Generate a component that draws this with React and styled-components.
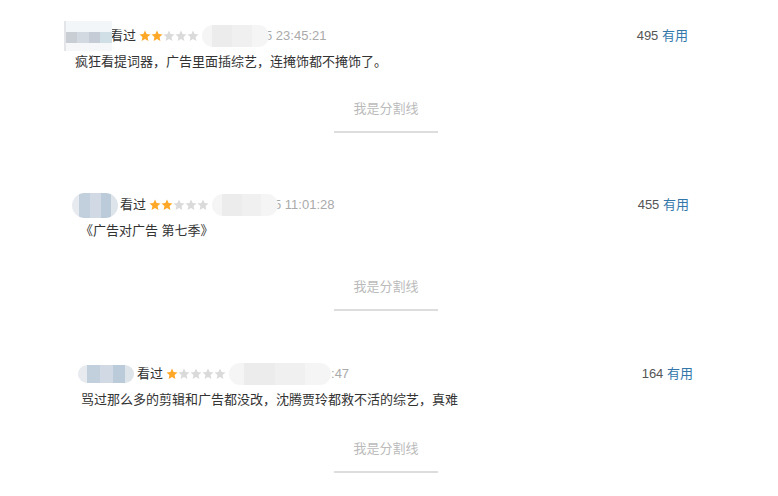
import React from 'react';
import styled, { createGlobalStyle } from 'styled-components';

const GlobalStyle = createGlobalStyle`
  html, body {
    margin: 0;
    padding: 0;
    background: #fff;
  }
  body {
    font-family: "Liberation Sans", "Noto Sans CJK SC", sans-serif;
    font-size: 13px;
    color: #494949;
  }
`;

const comments = [
  {
    top: 26,
    left: 64,
    right: 90,
    name: { width: 46, height: 30, shape: 'rect' },
    nameGap: -2,
    stars: 2,
    dateBlur: 67,
    timeShift: -4,
    time: '5 23:45:21',
    text: '疯狂看提词器，广告里面插综艺，连掩饰都不掩饰了。',
    textLeft: 11,
    votes: 495,
    dividerGap: 27,
  },
  {
    top: 62,
    left: 72,
    right: 89,
    name: { width: 46, height: 25, shape: 'pill' },
    nameGap: 2,
    stars: 2,
    dateBlur: 66,
    timeShift: -4,
    time: '5 11:01:28',
    text: '《广告对广告 第七季》',
    textLeft: 8,
    votes: 455,
    dividerGap: 36,
  },
  {
    top: 53,
    left: 78,
    right: 85,
    name: { width: 56, height: 18, shape: 'pill' },
    nameGap: 3,
    stars: 1,
    dateBlur: 102,
    timeShift: 0,
    time: ':47',
    text: '骂过那么多的剪辑和广告都没改，沈腾贾玲都救不活的综艺，真难',
    textLeft: 3,
    votes: 164,
    dividerGap: 29,
  },
];

function Star({ on }) {
  return (
    <svg width="12" height="12" viewBox="0 0 24 24">
      <polygon
        points="12,1 15.2,8.2 23,9 17.1,14.2 18.8,22 12,18 5.2,22 6.9,14.2 1,9 8.8,8.2"
        fill={on ? '#ffa726' : '#dadada'}
      />
    </svg>
  );
}

export default function App() {
  return (
    <>
      <GlobalStyle />
      <Page>
        {comments.map((c, i) => (
          <Comment key={i} $top={c.top}>
            <Header $left={c.left} $right={c.right}>
              <Meta>
                <NameBlur $w={c.name.width} $h={c.name.height} $shape={c.name.shape} />
                <Watched $gap={c.nameGap}>看过</Watched>
                <Stars>
                  {[0, 1, 2, 3, 4].map((n) => (
                    <Star key={n} on={n < c.stars} />
                  ))}
                </Stars>
                <DateBlur $w={c.dateBlur} />
                <Time $shift={c.timeShift}>{c.time}</Time>
              </Meta>
              <Votes>
                {c.votes} <span>有用</span>
              </Votes>
            </Header>
            <Text $left={c.left + c.textLeft}>{c.text}</Text>
            <Divider $gap={c.dividerGap}>
              <DividerLabel>我是分割线</DividerLabel>
              <DividerLine />
            </Divider>
          </Comment>
        ))}
      </Page>
    </>
  );
}

const Page = styled.div`
  width: 778px;
  height: 496px;
  overflow: hidden;
`;

const Comment = styled.section`
  padding-top: ${(p) => p.$top}px;
`;

const Header = styled.div`
  display: flex;
  align-items: center;
  justify-content: space-between;
  height: 20px;
  margin-left: ${(p) => p.$left}px;
  margin-right: ${(p) => p.$right}px;
`;

const Meta = styled.div`
  display: flex;
  align-items: center;
`;

const NameBlur = styled.div`
  width: ${(p) => p.$w}px;
  height: ${(p) => p.$h}px;
  margin: -10px 0;
  border-radius: ${(p) => (p.$shape === 'pill' ? `${p.$h / 2}px` : '0')};
  background: ${(p) =>
    p.$shape === 'rect'
      ? `linear-gradient(to bottom, #f3f6f9 0 38%, transparent 38% 72%, #f6f7f9 72%),
         linear-gradient(to right, #c9ced5 0 25%, #d3d9e0 25% 50%, #c5ccd6 50% 75%, #cfdfe5 75%)`
      : `linear-gradient(to right, #e7ebf0 0 16%, #c2d0de 16% 40%, #d1dae4 40% 62%, #bccbd9 62% 84%, #dde4ea 84%)`};
  border-left: ${(p) => (p.$shape === 'rect' ? '2px solid #e3e5e8' : 'none')};
  filter: blur(0.6px);
`;

const Watched = styled.span`
  margin-left: ${(p) => p.$gap}px;
  color: #333;
  line-height: 20px;
`;

const Stars = styled.span`
  display: inline-flex;
  margin-left: 3px;

  svg {
    display: block;
  }
`;

const DateBlur = styled.div`
  width: ${(p) => p.$w}px;
  height: 22px;
  margin: -6px 0 -6px 3px;
  border-radius: 11px;
  background: linear-gradient(to right, #f5f5f5 0 15%, #ececec 15% 45%, #f0f0f0 45% 75%, #f5f5f5 75%);
  filter: blur(0.6px);
`;

const Time = styled.span`
  margin-left: ${(p) => p.$shift}px;
  color: #aaa;
  line-height: 20px;
`;

const Votes = styled.span`
  color: #555;
  line-height: 20px;

  span {
    color: #37a;
  }
`;

const Text = styled.p`
  margin: 6px 0 0 ${(p) => p.$left}px;
  line-height: 20px;
  color: #333;
`;

const Divider = styled.div`
  display: flex;
  flex-direction: column;
  align-items: center;
  width: 104px;
  margin: ${(p) => p.$gap}px 0 0 334px;
`;

const DividerLabel = styled.span`
  font-size: 13px;
  line-height: 20px;
  color: #bbb;
`;

const DividerLine = styled.div`
  width: 104px;
  height: 2px;
  margin-top: 12px;
  background: #ddd;
`;
